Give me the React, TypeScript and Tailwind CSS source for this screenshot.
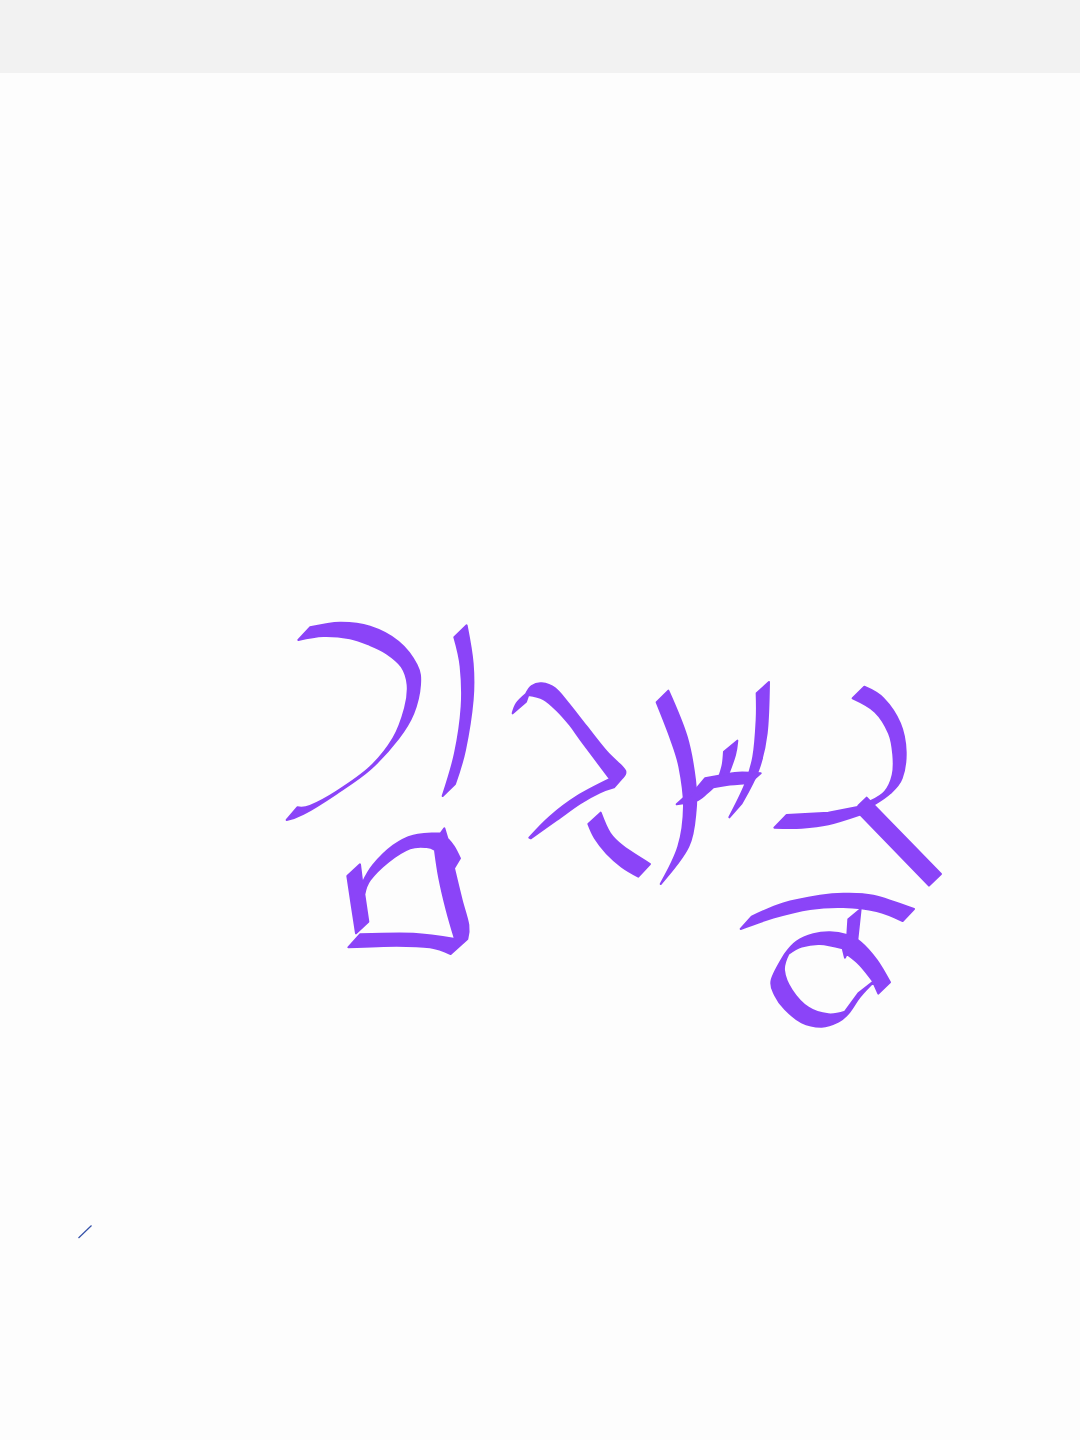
const STROKE = '#8b44f8'

// outline points in the 3x space of each glyph's box, "!" marks a sharp corner
function outline(src: string) {
  const pts = src.trim().split(/\s+/).map(s => {
    const corner = s.endsWith('!')
    const [x, y] = s.replace('!', '').split(',').map(Number)
    return { x, y, corner }
  })
  const n = pts.length
  let d = `M${pts[0].x} ${pts[0].y}`
  for (let i = 0; i < n; i++) {
    const p0 = pts[(i - 1 + n) % n]
    const p1 = pts[i]
    const p2 = pts[(i + 1) % n]
    const p3 = pts[(i + 2) % n]
    const c1x = p1.corner ? p1.x : p1.x + (p2.x - p0.x) / 6
    const c1y = p1.corner ? p1.y : p1.y + (p2.y - p0.y) / 6
    const c2x = p2.corner ? p2.x : p2.x - (p3.x - p1.x) / 6
    const c2y = p2.corner ? p2.y : p2.y - (p3.y - p1.y) / 6
    d += ` C${c1x} ${c1y} ${c2x} ${c2y} ${p2.x} ${p2.y}`
  }
  return d + 'Z'
}

const GLYPHS: { x: number; y: number; strokes: string[][] }[] = [
  {
    x: 270,
    y: 610,
    strokes: [
      ['85,90! 120,52! 210,38 300,50 385,95 440,165 450,225 430,310 385,385 300,478 200,550 100,612 50,630! 82,592! 120,588 200,545 300,472 370,385 405,295 413,225 395,170 350,130 300,105 240,85 160,78'],
      ['553,82! 590,46! 608,160 608,270 585,420 555,522! 518,558! 555,430 575,290 572,170'],
    ],
  },
  {
    x: 330,
    y: 815,
    strokes: [
      ['52,183! 90,148! 97,205! 130,150 190,92 250,62 332,55! 343,40! 352,70! 372,95 390,130! 372,160! 395,255 415,330 412,372! 362,417! 300,397 200,392 55,397! 90,358! 250,356 375,372! 350,285 328,190 315,105! 290,96 240,100 175,140 120,195 103,238! 115,320! 78,355! 65,270'],
    ],
  },
  {
    x: 500,
    y: 670,
    strokes: [
      ['38,130! 50,100 78,72! 95,48 125,40 165,55 205,100 260,170 320,245 368,292 376,310 363,328! 342,352! 300,367 240,400 170,450 92,505! 88,503! 150,440 230,380 330,327! 250,220 210,165 170,120 130,87 85,75! 78,95!'],
      ['265,462! 302,428! 330,490 370,530 450,582! 415,620! 365,590 320,550 285,505'],
    ],
  },
  {
    x: 650,
    y: 670,
    strokes: [
      ['20,97! 55,62! 110,200 135,330 137,420 115,530 32,642! 85,530 102,410 88,290 62,205'],
      ['320,70! 357,36! 350,190 325,300 275,400! 238,442! 285,345 310,260 320,150'],
      ['222,245! 262,212! 255,255 235,312! 207,322! 218,285'],
      ['80,403! 100,385! 120,380 140,355! 165,325! 215,316! 265,308 332,310! 315,325! 290,340! 230,345 190,352! 170,370 140,392 100,400'],
    ],
  },
  {
    x: 765,
    y: 675,
    strokes: [
      ['263,70! 298,35! 355,70 405,145 422,230 410,310 375,355 325,390! 318,378! 360,350 383,300 385,240 372,175 330,110'],
      ['65,420! 190,413! 282,395! 288,418! 190,448 110,458 28,458!'],
      ['305,368! 528,597! 492,632! 282,415! 280,392!'],
    ],
  },
  {
    x: 730,
    y: 885,
    strokes: [
      ['32,132! 65,95! 160,55 270,32 340,26 430,32 552,72! 518,108! 440,78 340,66 240,72 130,98'],
      ['355,103! 392,72! 382,165! 352,150!'],
      [
        '125,285 165,207! 200,170 250,148 300,142 350,150 390,170 440,225 480,292! 445,326! 430,292! 390,335 355,385 325,410 275,425 215,412 165,372 135,330',
        '430,290! 385,325! 345,380! 295,388 235,368 185,315 162,255 175,207! 215,185 270,177 338,190! 345,218! 350,207! 390,240',
      ],
    ],
  },
]

export default function App() {
  return (
    <div className="flex h-[1440px] w-[1080px] flex-col overflow-hidden bg-[#fdfdfd]">
      <header className="h-[73px] shrink-0 bg-[#f2f2f2]" />
      <main className="relative flex-1">
        <svg className="absolute inset-0 h-full w-full" viewBox="0 73 1080 1367">
          {GLYPHS.map(g => (
            <g key={`${g.x}-${g.y}`} transform={`translate(${g.x} ${g.y}) scale(0.3333)`}>
              {g.strokes.map(s => (
                <path
                  key={s[0]}
                  d={s.map(outline).join(' ')}
                  fill={STROKE}
                  fillRule="evenodd"
                  stroke={STROKE}
                  strokeWidth="6"
                  strokeLinejoin="round"
                />
              ))}
            </g>
          ))}
          <line x1="78.5" y1="1238" x2="91.5" y2="1225.5" stroke="#3450a8" strokeWidth="1.2" />
        </svg>
      </main>
    </div>
  )
}
